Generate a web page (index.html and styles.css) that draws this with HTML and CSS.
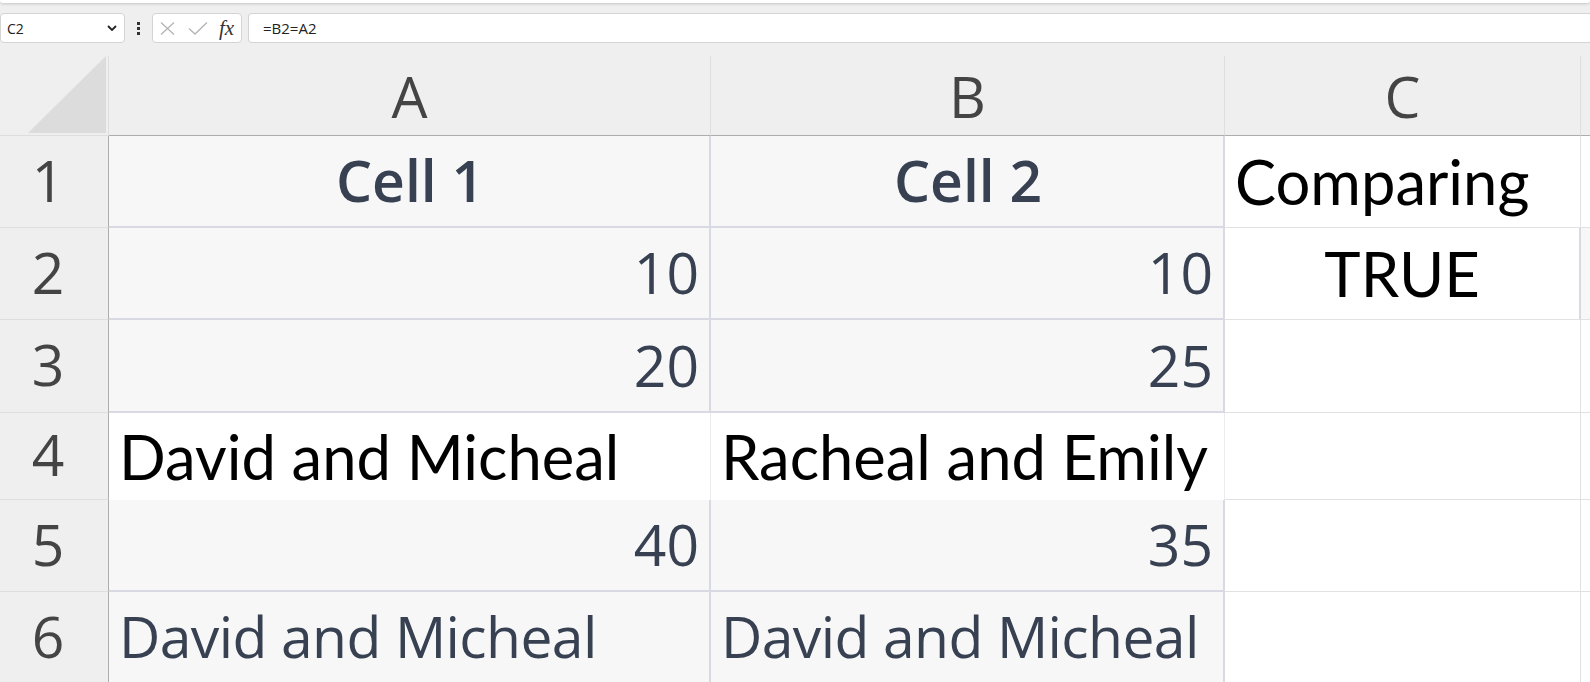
FILE: index.html
```html
<!DOCTYPE html>
<html lang="en">
<head>
  <meta charset="UTF-8">
  <meta name="viewport" content="width=device-width, initial-scale=1.0">
  <title>Comparing cells</title>
  <link rel="stylesheet" href="styles.css">
</head>
<body>
  <div class="ribbon-edge"></div>

  <!-- 수식 입력줄 -->
  <div class="formula-bar">
    <div class="name-box">
      <span>C2</span>
      <svg class="chevron" width="10" height="6" viewBox="0 0 10 6"><path d="M1 1 L5 5 L9 1" fill="none" stroke="#222" stroke-width="1.8"/></svg>
    </div>
    <div class="dots"><i></i><i></i><i></i></div>
    <div class="fx-box">
      <svg width="16" height="13" viewBox="0 0 16 13"><path d="M1 0.5 L14 12.5 M14 0.5 L1 12.5" stroke="#b4b4b4" stroke-width="1.3" fill="none"/></svg>
      <svg width="20" height="13" viewBox="0 0 20 13"><path d="M1 6.5 L7 12 L19 0.5" stroke="#b4b4b4" stroke-width="1.3" fill="none"/></svg>
      <span class="fx">fx</span>
    </div>
    <div class="formula-input">=B2=A2</div>
  </div>

  <!-- 시트 영역 -->
  <div class="sheet">
    <div class="corner">
      <svg width="109" height="80" viewBox="0 0 109 80"><polygon points="106,0 106,77 28,77" fill="#dcdcdc"/></svg>
    </div>
    <div class="col-head">A</div>
    <div class="col-head">B</div>
    <div class="col-head">C</div>
    <div class="col-head last"></div>

    <div class="row-head">1</div>
    <div class="cell styled bold center">Cell 1</div>
    <div class="cell styled bold center">Cell 2</div>
    <div class="cell plain calibri">Comparing</div>
    <div class="cell plain"></div>

    <div class="row-head">2</div>
    <div class="cell styled right">10</div>
    <div class="cell styled right">10</div>
    <div class="cell plain calibri center active">TRUE</div>
    <div class="cell plain shaded"></div>

    <div class="row-head">3</div>
    <div class="cell styled right">20</div>
    <div class="cell styled right">25</div>
    <div class="cell plain"></div>
    <div class="cell plain"></div>

    <div class="row-head">4</div>
    <div class="cell white calibri">David and Micheal</div>
    <div class="cell white calibri">Racheal and Emily</div>
    <div class="cell plain"></div>
    <div class="cell plain"></div>

    <div class="row-head">5</div>
    <div class="cell styled right">40</div>
    <div class="cell styled right">35</div>
    <div class="cell plain"></div>
    <div class="cell plain"></div>

    <div class="row-head">6</div>
    <div class="cell styled tight">David and Micheal</div>
    <div class="cell styled tight">David and Micheal</div>
    <div class="cell plain"></div>
    <div class="cell plain"></div>
  </div>
</body>
</html>
```

FILE: styles.css
```css
/* 기본 설정 */
body {
  margin: 0;
  background-color: #efefef;
  font-family: "Open Sans", "Noto Sans", sans-serif;
  overflow: hidden;
}

/* 리본 아래 가장자리 */
.ribbon-edge {
  height: 3px;
  background-color: #ffffff;
  border-radius: 0 0 6px 6px;
  box-shadow: 0 1px 3px rgba(0, 0, 0, 0.18);
}

/* 수식 입력줄 */
.formula-bar {
  display: flex;
  height: 30px;
  margin: 10px 0 13px;
}

.name-box {
  width: 125px;
  box-sizing: border-box;
  display: flex;
  align-items: center;
  justify-content: space-between;
  padding: 0 7px 0 6px;
  background-color: #ffffff;
  border: 1px solid #d4d4d4;
  border-radius: 4px;
  font-size: 14px;
  color: #222222;
}

.dots {
  width: 27px;
  display: flex;
  flex-direction: column;
  align-items: center;
  justify-content: center;
  gap: 2px;
}

.dots i {
  width: 3px;
  height: 3px;
  background-color: #333333;
}

.fx-box {
  width: 90px;
  box-sizing: border-box;
  display: flex;
  align-items: center;
  gap: 12px;
  padding-left: 7px;
  background-color: #ffffff;
  border: 1px solid #d4d4d4;
  border-radius: 4px;
}

.fx {
  font-family: "Liberation Serif", "DejaVu Serif", serif;
  font-style: italic;
  font-size: 21px;
  color: #333333;
  margin-left: -1px;
}

.formula-input {
  flex: 1;
  margin-left: 6px;
  display: flex;
  align-items: center;
  padding-left: 14px;
  background-color: #ffffff;
  border: 1px solid #d4d4d4;
  border-right: none;
  border-radius: 4px 0 0 4px;
  font-size: 15px;
  color: #222222;
}

/* 시트 격자 */
.sheet {
  display: grid;
  grid-template-columns: 109px 602px 514px 356px 1fr;
  grid-template-rows: 80px 92px 92px 93px 87px 92px 92px;
}

.corner {
  border-right: 1px solid #dedede;
  border-bottom: 1px solid #dedede;
  box-sizing: border-box;
}

.corner svg {
  display: block;
}

.col-head {
  display: flex;
  align-items: center;
  justify-content: center;
  border-right: 1px solid #dedede;
  border-bottom: 1px solid #adadad;
  font-size: 57px;
  color: #444444;
}

.col-head.last {
  border-right: none;
}

.row-head {
  display: flex;
  align-items: center;
  justify-content: center;
  padding: 0 12px 4px 0;
  border-right: 1px solid #adadad;
  border-bottom: 1px solid #dedede;
  font-size: 57px;
  color: #444444;
}

/* 셀 */
.cell {
  display: flex;
  align-items: center;
  box-sizing: border-box;
  padding: 0 10px 2px 12px;
  white-space: nowrap;
  overflow: hidden;
}

.cell.styled {
  background-color: #f7f7f8;
  border-right: 2px solid #d9d9e3;
  border-bottom: 2px solid #d9d9e3;
  font-size: 57px;
  color: #374151;
}

.cell.tight {
  padding-left: 10px;
  letter-spacing: -0.6px;
}

.cell.white {
  background-color: #ffffff;
  border-right: 1px solid #ececec;
}

.cell.plain {
  background-color: #ffffff;
  border-right: 1px solid #e1e1e1;
  border-bottom: 1px solid #e1e1e1;
}

.cell.shaded {
  background-color: #f7f7f8;
}

.cell.active {
  border-right: 2px solid #d9d9e3;
}

.cell.calibri {
  font-family: Lato, "Liberation Sans", sans-serif;
  font-size: 61.5px;
  color: #000000;
  padding-left: 10px;
}

.bold {
  font-weight: 600;
}

.center {
  justify-content: center;
}

.right {
  justify-content: flex-end;
}
```
